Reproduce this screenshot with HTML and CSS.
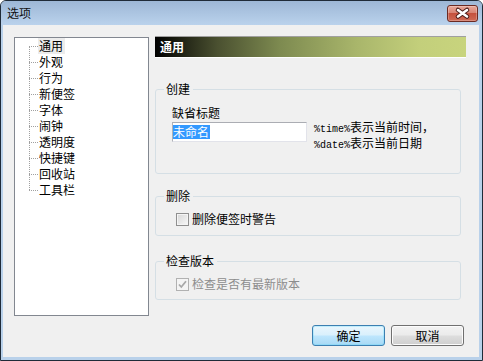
FILE: index.html
```html
<!DOCTYPE html>
<html lang="zh-CN">
<head>
<meta charset="utf-8">
<title>选项</title>
<link rel="stylesheet" href="styles.css">
</head>
<body>
<div class="window">
  <div class="titlebar">
    <span class="title">选项</span>
    <div class="close">
      <svg width="29" height="15" viewBox="0 0 29 15">
        <path d="M10 4 L19 10.5 M19 4 L10 10.5" stroke="#4a1c18" stroke-width="4.6" stroke-linecap="round" fill="none"/>
        <path d="M10 4 L19 10.5 M19 4 L10 10.5" stroke="#ffffff" stroke-width="2.6" stroke-linecap="round" fill="none"/>
      </svg>
    </div>
  </div>
  <div class="client">
    <div class="main">
      <div class="tree">
        <ul class="items">
          <li><span class="cur">通用</span></li>
          <li>外观</li>
          <li>行为</li>
          <li>新便签</li>
          <li>字体</li>
          <li>闹钟</li>
          <li>透明度</li>
          <li>快捷键</li>
          <li>回收站</li>
          <li>工具栏</li>
        </ul>
      </div>
      <div class="panel">
        <div class="header">通用</div>
        <fieldset class="group g1">
          <legend>创建</legend>
          <div class="gbody row">
            <div class="field">
              <div class="label">缺省标题</div>
              <div class="input"><span class="sel">未命名</span></div>
            </div>
            <div class="hint">
              <div><span class="lat">%time%</span>表示当前时间，</div>
              <div><span class="lat">%date%</span>表示当前日期</div>
            </div>
          </div>
        </fieldset>
        <fieldset class="group g2">
          <legend>删除</legend>
          <div class="gbody check">
            <span class="box"></span><span>删除便签时警告</span>
          </div>
        </fieldset>
        <fieldset class="group g3">
          <legend>检查版本</legend>
          <div class="gbody check disabled">
            <span class="box checked">
              <svg width="11" height="11" viewBox="0 0 11 11"><path d="M2 5.5 L4.3 8 L9 2.3" stroke="#a8a8a8" stroke-width="1.8" fill="none"/></svg>
            </span><span>检查是否有最新版本</span>
          </div>
        </fieldset>
      </div>
    </div>
    <div class="buttons">
      <div class="btn default">确定</div>
      <div class="btn">取消</div>
    </div>
  </div>
</div>
</body>
</html>
```
FILE: styles.css
```css
* { box-sizing: border-box; }
html, body { margin: 0; padding: 0; }
body {
  width: 483px;
  height: 361px;
  overflow: hidden;
  font-family: "Noto Sans CJK SC", "Liberation Sans", sans-serif;
  font-size: 12px;
  color: #000;
}
.window {
  width: 483px;
  height: 361px;
  border: 1px solid #1f2b38;
  border-radius: 6px 6px 0 0;
  background: #b9d1ea;
  display: flex;
  flex-direction: column;
  overflow: hidden;
}
.titlebar {
  height: 24px;
  flex: none;
  display: flex;
  justify-content: space-between;
  align-items: flex-start;
  background: linear-gradient(to bottom, #9db7d6, #bad2ec);
}
.title {
  padding-left: 6px;
  line-height: 24px;
  font-size: 12px;
  color: #101010;
}
.close {
  margin-top: 4px;
  margin-right: 4px;
  width: 31px;
  height: 17px;
  border: 1px solid #6b2a22;
  border-radius: 3px;
  background: linear-gradient(to bottom, #e9a899 0%, #d88474 45%, #c5513d 50%, #cf6a55 100%);
  box-shadow: inset 0 0 0 1px rgba(255,255,255,0.25);
  display: flex;
}
.client {
  flex: 1;
  margin: 0 3px 3px 2px;
  background: #f0f0f0;
  display: flex;
  flex-direction: column;
}
.main {
  display: flex;
  padding: 11px 0 0 11px;
  gap: 6px;
}
.tree {
  margin-top: 1px;
  width: 135px;
  height: 279px;
  border: 1px solid #828790;
  background: #fff;
}
.items {
  list-style: none;
  margin: 0;
  padding: 0 0 0 14px;
}
.items li {
  position: relative;
  line-height: 16px;
  height: 16px;
  padding-left: 10px;
}
.items li::before {
  content: "";
  position: absolute;
  left: 0;
  top: 8px;
  width: 9px;
  border-top: 1px dotted #a0a0a0;
}
.items li::after {
  content: "";
  position: absolute;
  left: 0;
  top: 8px;
  height: 16px;
  border-left: 1px dotted #a0a0a0;
}
.items li:last-child::after { display: none; }
.cur {
  display: inline-block;
  margin-left: -1px;
  padding: 0 2px 0 1px;
  background: #ececec;
}
.panel {
  width: 311px;
  display: flex;
  flex-direction: column;
}
.header {
  height: 22px;
  border-top: 1px solid #a0a0a0;
  border-bottom: 1px solid #ffffff;
  background: linear-gradient(to right, #000 0%, #4a5030 20%, #7d8a50 40%, #a9b66b 65%, #c3cf7b 85%, #c8d47d 100%);
  color: #fff;
  font-weight: bold;
  padding-left: 5px;
  line-height: 20px;
}
.group {
  margin: 0;
  padding: 0;
  width: 306px;
  min-width: 0;
  border: 1px solid #d5dfe5;
  border-radius: 3px;
}
.group legend {
  margin-left: 8px;
  padding: 0 3px 0 2px;
  line-height: 14px;
}
.g1 { margin-top: 24px; }
.g2 { margin-top: 15px; }
.g3 { margin-top: 18px; }
.g1 .gbody { padding: 10px 16px 21px 16px; }
.g2 .gbody { padding: 9px 16px 9px 20px; }
.g3 .gbody { padding: 9px 16px 8px 20px; }
.row { display: flex; align-items: flex-start; }
.label { line-height: 14px; }
.input {
  margin-top: 2px;
  width: 135px;
  height: 20px;
  background: #fff;
  border: 1px solid #e2e3ea;
  border-top-color: #abadb3;
  border-left-color: #b0b2b8;
  padding-top: 0;
}
.sel {
  display: inline-block;
  height: 14px;
  line-height: 14px;
  background: #3399ff;
  color: #fff;
  padding-right: 1px;
}
.hint {
  margin-top: 14px;
  margin-left: 7px;
  line-height: 13px;
  white-space: nowrap;
}
.lat {
  font-family: "Liberation Mono", "DejaVu Sans Mono", monospace;
  font-size: 10px;
}
.check {
  display: flex;
  align-items: center;
  gap: 3px;
  line-height: 14px;
}
.box {
  width: 13px;
  height: 13px;
  border: 1px solid #8f8f8f;
  background: linear-gradient(135deg, #d6d6d6, #f8f8f8);
  box-shadow: inset 0 0 0 1px #f4f4f4;
  display: flex;
  align-items: center;
  justify-content: center;
}
.disabled { color: #8d8d8d; }
.box.checked {
  border-color: #b1b1b1;
  background: #f4f4f4;
  box-shadow: none;
}
.buttons {
  margin-top: auto;
  display: flex;
  justify-content: flex-end;
  gap: 6px;
  padding: 0 15px 11px 0;
}
.btn {
  width: 73px;
  height: 21px;
  border: 1px solid #707070;
  border-radius: 3px;
  background: linear-gradient(to bottom, #f2f2f2 0%, #ebebeb 48%, #dddddd 52%, #cfcfcf 100%);
  box-shadow: inset 0 0 0 1px #fcfcfc;
  text-align: center;
  line-height: 19px;
}
.btn.default {
  border-color: #3c7fb1;
  background: linear-gradient(to bottom, #eaf6fd 0%, #d9f0fc 48%, #bee6fd 52%, #a7d9f5 100%);
  box-shadow: inset 0 0 0 1px #48d8fb40;
}
```
